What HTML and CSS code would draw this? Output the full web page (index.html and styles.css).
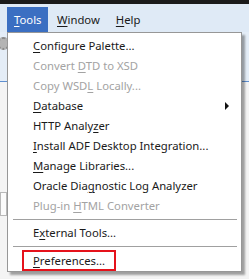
FILE: index.html
```html
<!DOCTYPE html>
<html lang="en">

<head>
    <meta charset="UTF-8">
    <meta name="viewport" content="width=device-width, initial-scale=1.0">
    <title>Tools menu</title>
    <link rel="stylesheet" href="styles.css">
</head>

<body>
    <div class="app">
        <div class="franja"></div>
        <div class="barra">
            <span class="boton activo"><u>T</u>ools</span>
            <span class="boton"><u>W</u>indow</span>
            <span class="boton"><u>H</u>elp</span>
        </div>
        <div class="fondo">
            <div class="zonaAzul">
                <div class="engranaje"></div>
            </div>
            <div class="zonaGris">
                <div class="caja"></div>
            </div>
        </div>

        <div class="menu">
            <div class="item"><u>C</u>onfigure Palette...</div>
            <div class="item apagado">Convert <u>D</u>TD to XSD</div>
            <div class="item apagado">Copy WSD<u>L</u> Locally...</div>
            <div class="item sub"><u>D</u>atabase<span class="flecha"></span></div>
            <div class="item">HTTP Analy<u>z</u>er</div>
            <div class="item"><u>I</u>nstall ADF Desktop Integration...</div>
            <div class="item"><u>M</u>anage Libraries...</div>
            <div class="item">Oracle Dia<u>g</u>nostic Log Analyzer</div>
            <div class="item apagado">Plug-in <u>H</u>TML Converter</div>
            <div class="separador"></div>
            <div class="item">E<u>x</u>ternal Tools...</div>
            <div class="separador"></div>
            <div class="item"><span class="marcado"><u>P</u>references...</span></div>
        </div>
    </div>
</body>

</html>
```

FILE: styles.css
```css
body {
    margin: 0;
    font-family: 'Noto Sans', 'Open Sans', sans-serif;
    font-size: 11.3px;
    color: #1a1a1a;
}

.app {
    position: relative;
    width: 249px;
    height: 279px;
    overflow: hidden;
    background: #f3f3f3;
}

.franja {
    height: 4px;
    background: #1b1b1b;
}

.barra {
    display: flex;
    height: 28px;
    padding-left: 7px;
    background: #dfeaf6;
    align-items: flex-end;
}

.boton {
    height: 25px;
    line-height: 25px;
    padding: 0 7px 0 8px;
    margin-right: 1px;
}

.boton.activo {
    background: #3b6fc2;
    color: white;
    padding: 0 7px;
    width: 27px;
}

.boton u,
.item u {
    text-decoration-thickness: 1px;
    text-underline-offset: 2px;
}

.fondo {
    height: 247px;
}

.zonaAzul {
    height: 50px;
    background: #e4edf7;
    border-bottom: 1px solid #5f8fd0;
    padding-top: 5px;
    box-sizing: border-box;
}

.engranaje {
    width: 9px;
    height: 9px;
    margin-left: -3px;
    border-radius: 50%;
    border: 2px dotted #8a8a8a;
    background: #b4b4b4;
}

.zonaGris {
    height: 196px;
    background: #f4f4f4;
    padding-top: 110px;
    box-sizing: border-box;
}

.caja {
    width: 5px;
    height: 22px;
    border: 1px solid #b8b8b8;
    background: #fbfbfb;
}

.menu {
    position: absolute;
    top: 32px;
    left: 7px;
    width: 233px;
    padding: 3px 0 1px 0;
    background: white;
    border: 1px solid #979797;
    box-shadow: 3px 3px 2px rgba(0, 0, 0, 0.35);
}

.item {
    height: 20px;
    line-height: 20px;
    padding-left: 25px;
    position: relative;
    white-space: nowrap;
}

.apagado {
    color: #a3a3a3;
}

.flecha {
    position: absolute;
    right: 12px;
    top: 6px;
    border-left: 4px solid #111;
    border-top: 4px solid transparent;
    border-bottom: 4px solid transparent;
}

.separador {
    height: 1px;
    margin: 3px 4px 3px 5px;
    background: #a0a0a0;
}

.marcado {
    display: inline-block;
    margin-left: -11px;
    padding: 0 9px 0 9px;
    height: 17px;
    line-height: 17px;
    border: 2px solid #e5121b;
}
```
